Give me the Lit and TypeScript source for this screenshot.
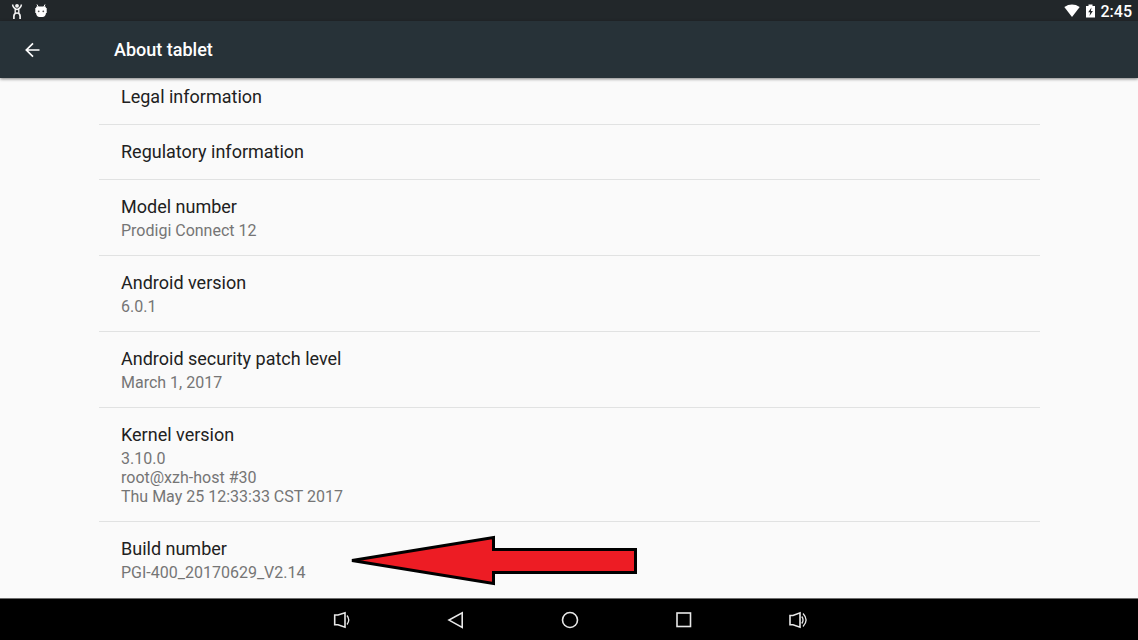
import { LitElement, html, css, svg } from "lit";
import { customElement } from "lit/decorators.js";

interface Entry {
  title: string;
  summary?: string[];
  marked?: boolean;
}

const ENTRIES: Entry[] = [
  { title: "Legal information" },
  { title: "Regulatory information" },
  { title: "Model number", summary: ["Prodigi Connect 12"] },
  { title: "Android version", summary: ["6.0.1"] },
  { title: "Android security patch level", summary: ["March 1, 2017"] },
  {
    title: "Kernel version",
    summary: ["3.10.0", "root@xzh-host #30", "Thu May 25 12:33:33 CST 2017"],
  },
  { title: "Build number", summary: ["PGI-400_20170629_V2.14"], marked: true },
];

const NAV = [
  {
    label: "Volume down",
    shape: svg`<path d="M4.700 7H8L15 4.800V19.200L8 16.700H4.700Z"/><path d="M17 7.500Q20.500 12 17 16.500" stroke-width="1.300"/>`,
  },
  { label: "Back", shape: svg`<path d="M18.200 4.800V19.400L5 12.100Z"/>` },
  { label: "Home", shape: svg`<circle cx="12" cy="12" r="7.500"/>` },
  { label: "Recent apps", shape: svg`<rect x="5" y="5" width="13.500" height="13.500"/>` },
  {
    label: "Volume up",
    shape: svg`<path d="M4 7.500H7L14 4.800V19.200L7 16.800H4Z"/><path d="M15.800 8.500Q18.300 12 15.800 15.500M17 5.500Q23.200 12 17 18.500" stroke-width="1.300"/>`,
  },
];

@customElement("app-root")
export class AppRoot extends LitElement {
  static styles = css`
    :host {
      display: flex;
      flex-direction: column;
      height: 100vh;
      overflow: hidden;
      background: #fafafa;
      color: #212121;
      font-family: Roboto, sans-serif;
    }
    svg {
      display: block;
    }
    button {
      border: 0;
      margin: 0;
      padding: 0;
      background: none;
      color: inherit;
      font: inherit;
      text-align: left;
      cursor: pointer;
    }
    .status {
      display: flex;
      justify-content: space-between;
      align-items: center;
      flex: none;
      height: 21px;
      padding: 0 6px 0 8px;
      background: #22272a;
      color: #fff;
    }
    .group {
      display: flex;
      align-items: center;
      gap: 6px;
    }
    .clock {
      font-size: 16px;
      line-height: 20px;
      font-weight: 500;
      padding-top: 2px;
    }
    .bar {
      display: flex;
      align-items: center;
      flex: none;
      height: 57px;
      padding-left: 20px;
      gap: 70px;
      background: #273238;
      color: #fff;
      z-index: 1;
      box-shadow: 0 1px 3px rgba(0, 0, 0, 0.5);
    }
    .bar h1 {
      margin: 0;
      font-size: 18px;
      line-height: 24px;
      font-weight: 500;
    }
    .content {
      flex: 1;
      min-height: 0;
      overflow: hidden;
      padding: 0 98px 0 99px;
    }
    .list {
      list-style: none;
      margin: -8px 0 0;
      padding: 0;
    }
    .item {
      position: relative;
      border-bottom: 1px solid #e1e2e2;
    }
    .item:last-child {
      border-bottom: 0;
    }
    .row {
      display: flex;
      flex-direction: column;
      gap: 2px;
      width: 100%;
      padding: 15px 22px;
    }
    .title {
      font-size: 18px;
      line-height: 24px;
    }
    .summary {
      font-size: 16px;
      line-height: 19px;
      color: #757575;
    }
    .line {
      display: block;
    }
    .pointer {
      position: absolute;
      left: 249px;
      top: 12px;
      pointer-events: none;
    }
    .nav {
      display: flex;
      justify-content: center;
      flex: none;
      box-sizing: border-box;
      height: 42px;
      padding: 1px 0 0 2px;
      border-top: 1px solid #6e6e6e;
      background: #000;
      color: #e8e8e8;
    }
    .key {
      display: flex;
      align-items: center;
      justify-content: center;
      width: 114px;
    }
  `;

  private renderEntry(entry: Entry) {
    return html`<li class="item">
      <button class="row">
        <span class="title">${entry.title}</span>
        ${entry.summary
          ? html`<span class="summary"
              >${entry.summary.map((l) => html`<span class="line">${l}</span>`)}</span
            >`
          : null}
      </button>
      ${entry.marked
        ? html`<svg class="pointer" width="290" height="52" viewBox="0 0 290 52" aria-hidden="true">
            <path
              d="M4 26.500L145.500 3.500V15.500H287.500V38.500H145.500V49.500Z"
              fill="#ed1c24"
              stroke="#000"
              stroke-width="3"
            />
          </svg>`
        : null}
    </li>`;
  }

  render() {
    return html`
      <div class="status">
        <div class="group">
          <svg width="18" height="20" viewBox="0 0 18 20" fill="none" stroke="#f2f2f2">
            <circle cx="9" cy="4.800" r="1.900" fill="#f2f2f2" stroke="none" />
            <path d="M4.500 3.500Q5.200 7.300 9 8.600Q12.800 7.300 13.500 3.500M7.200 8V12M10.800 8V12" stroke-width="1.400" />
            <path d="M5.900 18V15Q6.200 12 9 12Q11.800 12 12.100 15V18" stroke-width="1.700" />
          </svg>
          <svg width="18" height="20" viewBox="0 0 18 20">
            <path d="M5 3.500L6.200 6M13 3.500L11.800 6" stroke="#fff" />
            <path d="M4.500 5.500H13.500L14 7H14.700V12H14Q13.500 16 10.500 16H7.500Q4.500 16 4 12H3.300V7H4Z" fill="#fff" />
            <circle cx="6.700" cy="10.300" r="0.900" fill="#555" />
            <circle cx="11.300" cy="10.300" r="0.900" fill="#555" />
          </svg>
        </div>
        <div class="group">
          <svg width="16" height="20" viewBox="0 0 16 20">
            <path d="M0.300 6Q8 1.200 15.700 6L8 16Z" fill="#fff" />
          </svg>
          <svg width="9" height="20" viewBox="0 0 9 20">
            <path d="M0 5H2.500V3.500H6.500V5H9V16.500H0Z" fill="#fff" />
            <path d="M5.500 6.500L2.200 11.200H4.200L3.500 15L6.900 10H4.900Z" fill="#22272a" />
          </svg>
          <span class="clock">2:45</span>
        </div>
      </div>
      <header class="bar">
        <button aria-label="Navigate up">
          <svg width="24" height="24" viewBox="0 0 24 24" fill="none" stroke="#fff" stroke-width="1.700">
            <path d="M19.500 12H6.500M13 5.300L6.300 12L13 18.700" />
          </svg>
        </button>
        <h1>About tablet</h1>
      </header>
      <main class="content">
        <ul class="list">
          ${ENTRIES.map((e) => this.renderEntry(e))}
        </ul>
      </main>
      <nav class="nav">
        ${NAV.map(
          (n) => html`<button class="key" aria-label=${n.label}>
            <svg width="24" height="24" viewBox="0 0 24 24" fill="none" stroke="currentColor" stroke-width="1.600">
              ${n.shape}
            </svg>
          </button>`
        )}
      </nav>
    `;
  }
}
